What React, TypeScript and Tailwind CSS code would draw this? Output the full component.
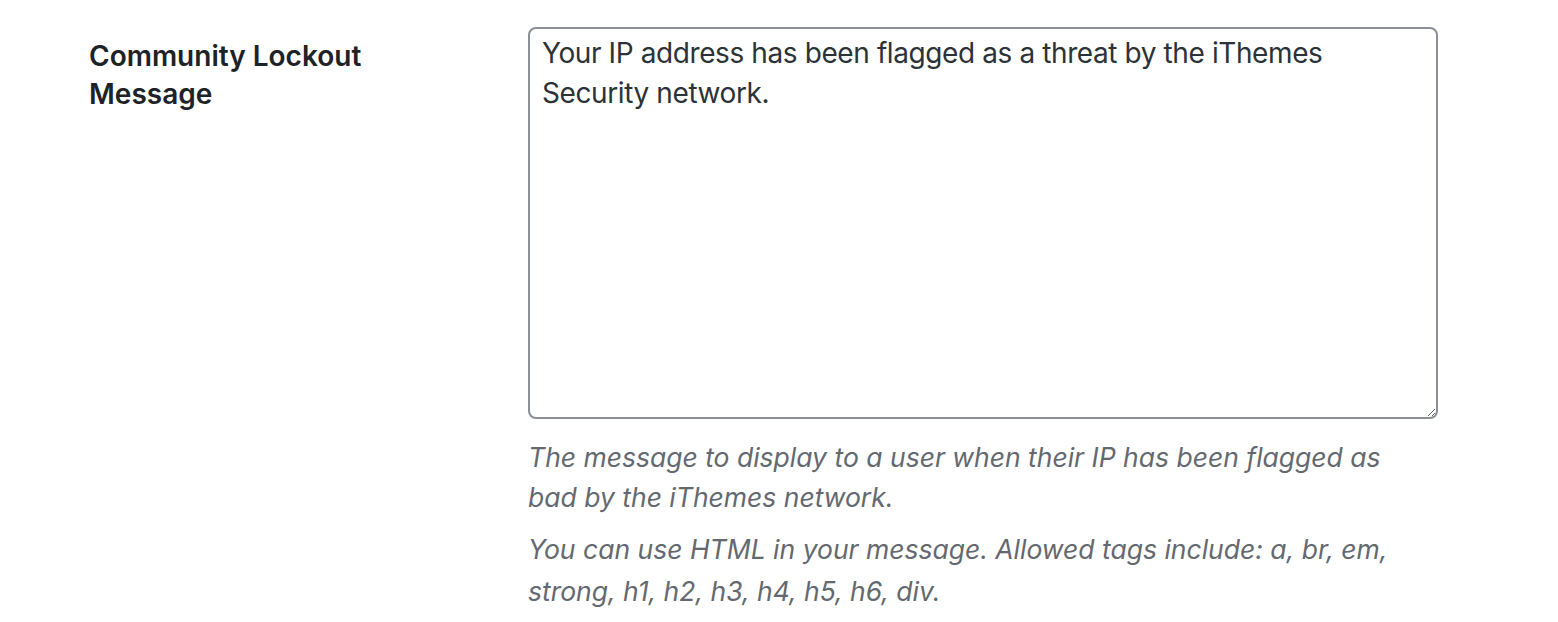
import React from "react";

export default function App() {
  return (
    <div className="min-h-[622px] w-[1558px] bg-white font-['Inter',sans-serif]">
      <div className="flex pl-[89px] pt-[37px]">
        <div className="w-[439px] shrink-0">
          <h3 className="text-[28px] font-semibold leading-[38px] text-[#1d2327]">
            Community Lockout
            <br />
            Message
          </h3>
        </div>
        <div className="w-[910px] -mt-[10px]">
          <textarea
            className="block h-[392px] w-[910px] rounded-[8px] border-2 border-[#8c8f94] px-[12px] py-[4px] text-[28px] leading-[40px] tracking-[-0.4px] text-[#2c3338] outline-none"
            defaultValue="Your IP address has been flagged as a threat by the iThemes Security network."
          />
          <div className="w-[885px]">
            <p className="mt-[18px] text-[26.5px] italic leading-[40px] text-[#646970]">
              The message to display to a user when their IP has been flagged as bad by the iThemes network.
            </p>
            <p className="mt-[11px] text-[26.5px] italic leading-[42px] text-[#646970]">
              You can use HTML in your message. Allowed tags include: a, br, em, strong, h1, h2, h3, h4, h5, h6, div.
            </p>
          </div>
        </div>
      </div>
    </div>
  );
}
